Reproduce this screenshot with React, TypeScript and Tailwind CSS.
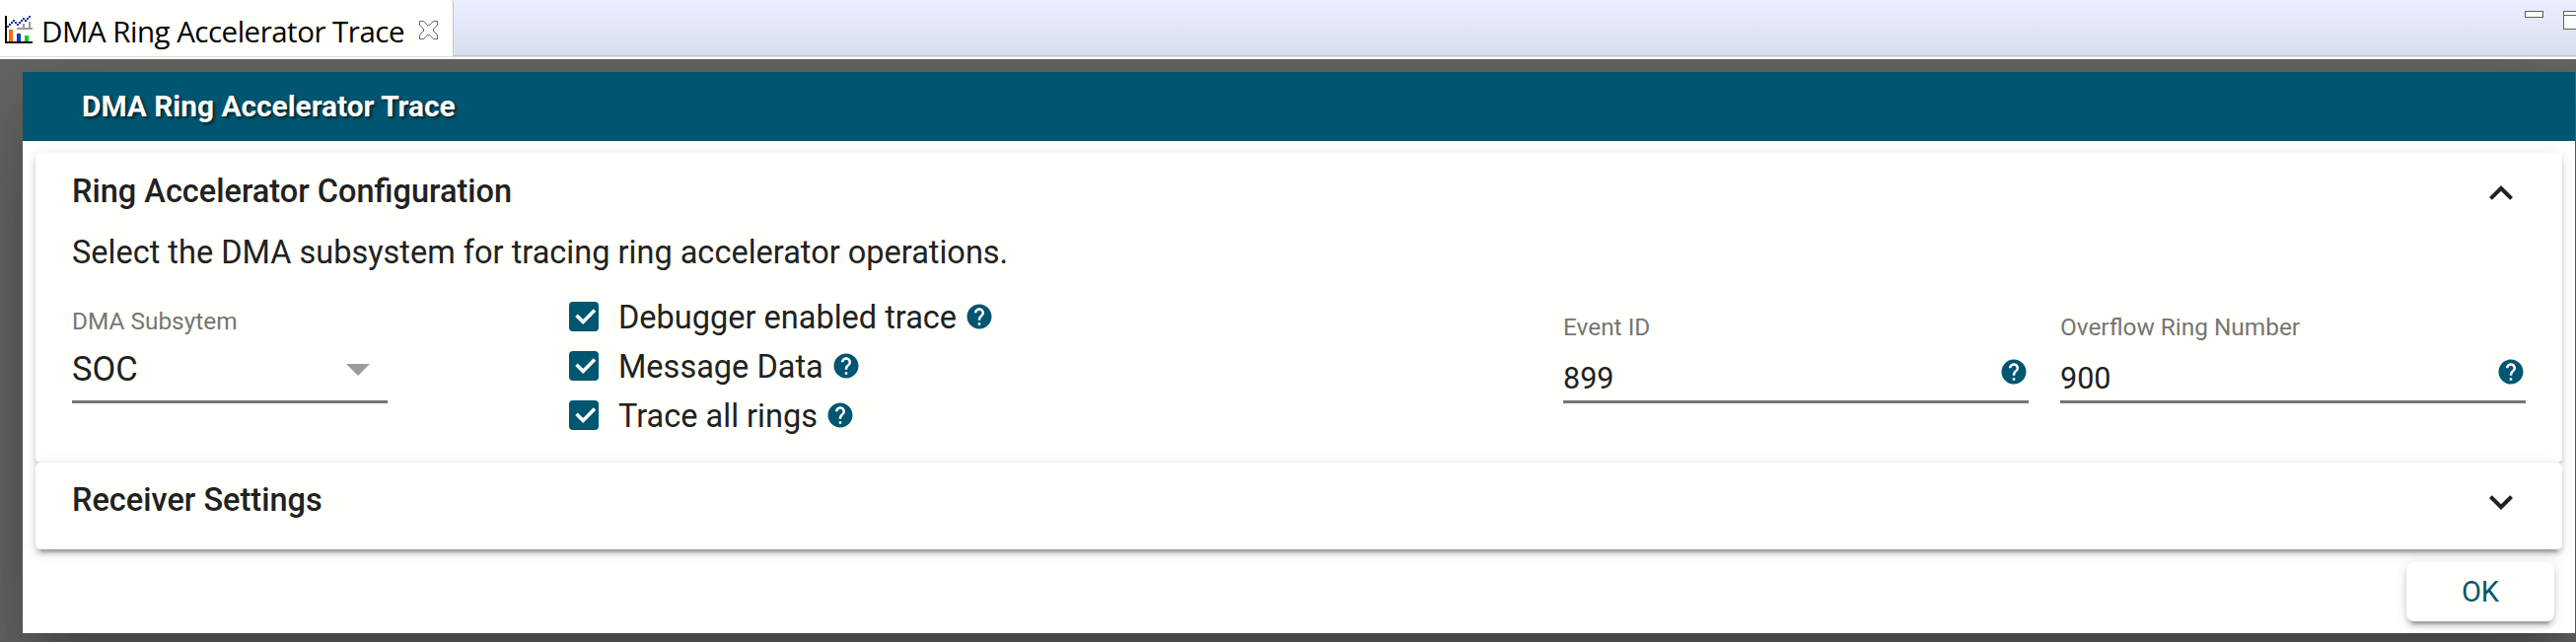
import type { ReactNode } from "react";

const CARD_SHADOW =
  "shadow-[0_7.5px_2.5px_-5px_rgba(0,0,0,0.2),0_5px_5px_0_rgba(0,0,0,0.14),0_2.5px_12.5px_0_rgba(0,0,0,0.12)]";

function ChartIcon() {
  return (
    <svg width="28" height="28" viewBox="0 0 28 28" shapeRendering="crispEdges" className="shrink-0">
      <path d="M0 0h2v26h26v2H0z" fill="#000" />
      <path d="M12 12h16v2H12zM18 8h2v4h-2zM24 6h2v6h-2z" fill="#9b9b9b" />
      <path d="M4 14h4v12H4z" fill="#ff6a00" />
      <path d="M12 18h4v8h-4z" fill="#0a32d8" />
      <path d="M20 20h4v6h-4z" fill="#0ccb22" />
      <path
        d="M2 10h2v2H2zM4 8h2v2H4zM6 6h2v2H6zM8 4h2v2H8zM10 6h2v2h-2zM12 8h2v2h-2zM14 6h2v2h-2zM16 4h2v2h-2zM18 2h2v2h-2zM20 4h2v2h-2zM22 2h2v2h-2zM24 0h2v2h-2z"
        fill="#0a2fa8"
      />
    </svg>
  );
}

function CloseIcon() {
  return (
    <svg width="19" height="19" viewBox="0 0 19 19" shapeRendering="crispEdges" className="shrink-0">
      <path
        d="M.5 .5H4.500L8.500 4.500h2L14.500 .5h4V4.500L14.500 8.500v2l4 4v4h-4L10.500 14.500h-2L4.500 18.500h-4V14.500L4.500 10.500v-2L.5 4.500z"
        fill="#fffffb"
        stroke="#6c6c68"
        strokeWidth="1"
      />
    </svg>
  );
}

function HelpIcon() {
  return (
    <svg width="30" height="30" viewBox="0 0 24 24" fill="#005570" className="shrink-0">
      <path d="M12 2C6.480 2 2 6.480 2 12s4.480 10 10 10 10-4.480 10-10S17.520 2 12 2zm1 17h-2v-2h2v2zm2.070-7.750l-.9.920C13.450 12.900 13 13.500 13 15h-2v-.5c0-1.100.45-2.100 1.170-2.830l1.240-1.260c.37-.36.59-.86.59-1.410 0-1.100-.9-2-2-2s-2 .9-2 2H8c0-2.210 1.790-4 4-4s4 1.790 4 4c0 .88-.36 1.680-.93 2.250z" />
    </svg>
  );
}

function Chevron({ up = false }: { up?: boolean }) {
  return (
    <svg width="48" height="48" viewBox="0 0 24 24" fill="#212121" className="mr-px shrink-0">
      {up ? (
        <path d="M12 9l-6 6 1.410 1.410L12 11.830l4.590 4.580L18 15z" />
      ) : (
        <path d="M16.590 8.590L12 13.170 7.410 8.590 6 10l6 6 6-6z" />
      )}
    </svg>
  );
}

function Check({ children }: { children: ReactNode }) {
  return (
    <label className="flex h-[50px] items-center text-[32.5px] leading-[48px]">
      <svg width="30" height="30" viewBox="0 0 30 30" className="mr-[20px] shrink-0">
        <rect width="30" height="30" rx="4" fill="#005570" />
        <path d="M7.500 13.800l6.700 6.600L26 8.600" fill="none" stroke="#fffffb" strokeWidth="3.600" />
      </svg>
      <span className="mr-[8px] pt-[2px]">{children}</span>
      <HelpIcon />
    </label>
  );
}

function Field({ label, value }: { label: string; value: string }) {
  return (
    <div className="flex h-[96px] flex-col border-b-[3px] border-[#757571]">
      <div className="mt-[4px] h-[29px] text-[24.4px] leading-[29px] text-[#757573]">{label}</div>
      <div className="mt-[19px] flex h-[30px] items-center justify-between text-[30.5px] leading-[30px]">
        <span className="relative top-[4px]">{value}</span>
        <span className="relative -top-[3px]">
          <HelpIcon />
        </span>
      </div>
    </div>
  );
}

export default function App() {
  return (
    <div className="flex h-[651px] w-[2612px] flex-col overflow-hidden bg-[#666663] font-['Roboto',sans-serif] text-[#212121]">
      <div className="relative z-10 flex h-[60px] shrink-0 flex-col bg-[#fffffb]">
        <div className="flex h-[58px] border-b border-[#d8dfe3] bg-linear-to-b from-[#ebeeff] to-[#d9deec]">
          <div className="flex h-[57px] w-[460px] shrink-0 items-center rounded-tr-[3px] border-r border-[#c3c6da] bg-[#fffffb] pl-[5px] pt-[3px]">
            <ChartIcon />
            <span className="ml-[9px] w-[383px] whitespace-nowrap pt-[3px] font-['Open_Sans',sans-serif] text-[29.500px] leading-[51px] tracking-[-0.5px] text-black">
              DMA Ring Accelerator Trace
            </span>
            <CloseIcon />
          </div>
          <div className="flex h-[57px] grow justify-end border-b border-[#c3c6da] pt-[11px]">
            <div className="mr-[20px] h-[7px] w-[19px] border border-[#5f5f5f] bg-[#fffffb]" />
            <div className="h-[19px] w-[13px] border border-r-0 border-[#5f5f5f] bg-[#fffffb]">
              <div className="h-[4px] border-b border-[#5f5f5f]" />
            </div>
          </div>
        </div>
      </div>

      <div className="ml-[23px] mt-[13px] flex h-[569px] w-[2588px] shrink-0 flex-col bg-[#fffffb] shadow-[0_27.5px_37.5px_-17.5px_rgba(0,0,0,0.2),0_60px_95px_7.5px_rgba(0,0,0,0.14),0_22.5px_115px_20px_rgba(0,0,0,0.12)]">
        <div className="h-[70px] shrink-0 bg-[#005570] pl-[60px] text-[29.9px] font-bold leading-[70px] tracking-[-0.03px] text-[#fffffb] [text-shadow:2px_2px_3px_rgba(0,0,0,0.6)]">
          DMA Ring Accelerator Trace
        </div>

        <div className={`mx-[13px] mt-[12px] h-[314px] shrink-0 rounded-[5px] bg-[#fffffb] px-[37px] ${CARD_SHADOW}`}>
          <div className="flex h-[78px] items-center justify-between">
            <h2 className="text-[32.5px] font-medium leading-[78px]">Ring Accelerator Configuration</h2>
            <Chevron up />
          </div>
          <p className="h-[46px] text-[32.5px] leading-[46px]">Select the DMA subsystem for tracing ring accelerator operations.</p>
          <div className="flex">
            <div className="mt-[27px] h-[103px] w-[320px] shrink-0 border-b-[3px] border-[#757571]">
              <div className="h-[40px] text-[24.4px] leading-[40px] text-[#757573]">DMA Subsytem</div>
              <div className="flex h-[56px] items-center justify-between pr-[18px] text-[34.5px] leading-[56px]">
                SOC
                <svg width="24" height="12" viewBox="0 0 24 12" fill="#9b9b98" className="mt-[2px]">
                  <path d="M0 0h24L12 12z" />
                </svg>
              </div>
            </div>
            <div className="ml-[184px] mt-[17px] w-[1008px] shrink-0">
              <Check>Debugger enabled trace</Check>
              <Check>Message Data</Check>
              <Check>Trace all rings</Check>
            </div>
            <div className="mt-[34px] grid w-[976px] grid-cols-2 gap-[32px]">
              <Field label="Event ID" value="899" />
              <Field label="Overflow Ring Number" value="900" />
            </div>
          </div>
        </div>

        <div className={`mx-[13px] flex h-[88px] shrink-0 items-start justify-between rounded-[5px] bg-[#fffffb] px-[37px] ${CARD_SHADOW}`}>
          <h2 className="text-[32.5px] font-medium leading-[76px]">Receiver Settings</h2>
          <div className="pt-[16px]">
            <Chevron />
          </div>
        </div>

        <div className="mt-[13px] flex justify-end pr-[21px]">
          <button className={`h-[60px] w-[150px] rounded-[8px] bg-[#fffffb] text-[29px] leading-[60px] text-[#005570] ${CARD_SHADOW}`}>
            OK
          </button>
        </div>
      </div>
    </div>
  );
}
